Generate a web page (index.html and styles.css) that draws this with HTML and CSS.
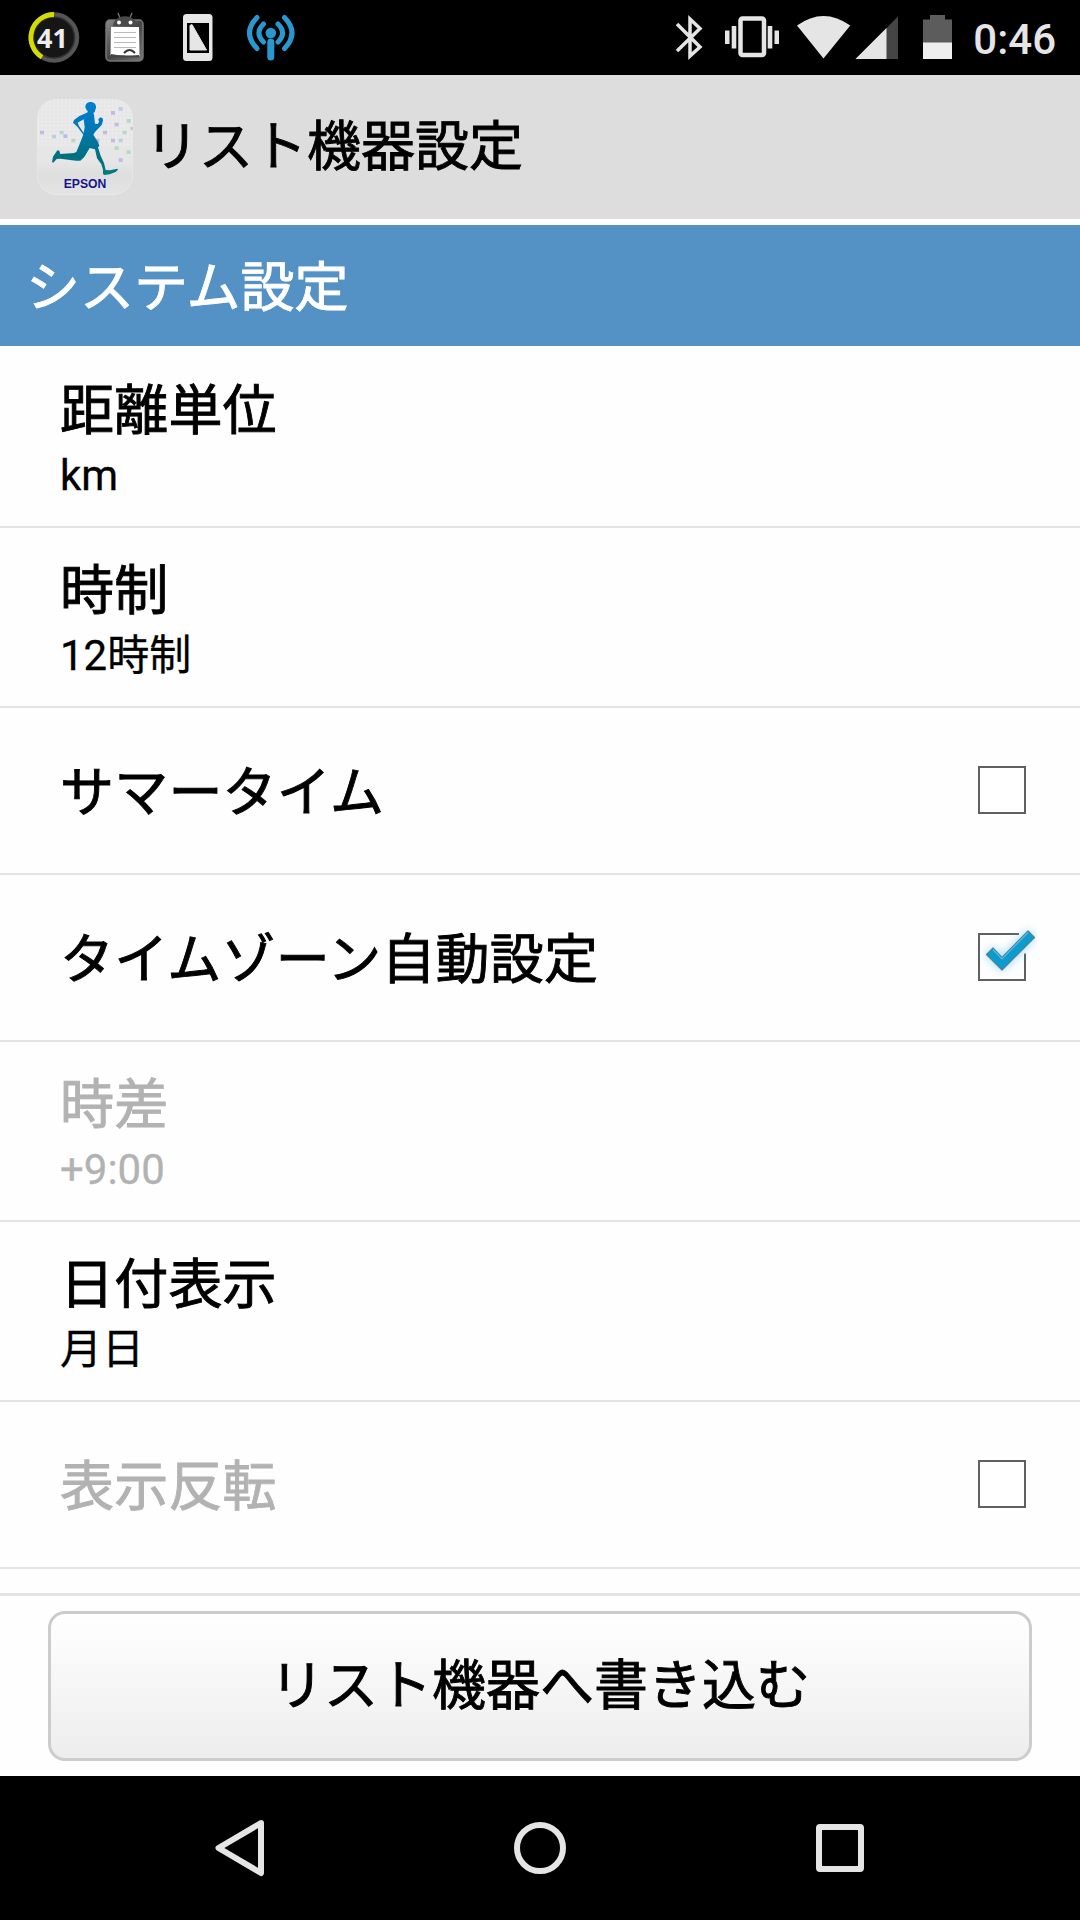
FILE: index.html
```html
<!DOCTYPE html>
<html lang="ja">
<head>
    <meta charset="UTF-8">
    <meta name="viewport" content="width=device-width, initial-scale=1.0">
    <title>リスト機器設定</title>
    <link rel="stylesheet" href="styles.css">
</head>
<body>
    <div class="status-bar">
        <div class="status-left">
            <svg width="54" height="75" viewBox="27 0 54 75">
                <circle cx="54" cy="37.5" r="23" fill="#161616" stroke="#555" stroke-width="4.5"/>
                <circle cx="54" cy="37.5" r="20.5" fill="none" stroke="#333" stroke-width="1.5"/>
                <path d="M54 14.5A23 23 0 0 0 42 57.2" fill="none" stroke="#d2dc00" stroke-width="4.8"/>
                <text class="badge" x="52.5" y="47.5" text-anchor="middle" textLength="31">41</text>
            </svg>
            <svg width="40" height="75" viewBox="106 0 40 75">
                <defs>
                    <linearGradient id="board" x1="0" y1="0" x2="1" y2="1">
                        <stop offset="0" stop-color="#8a8a8a"/>
                        <stop offset=".5" stop-color="#444"/>
                        <stop offset="1" stop-color="#777"/>
                    </linearGradient>
                </defs>
                <path d="M119 13l2 5M133 13l-2 5" stroke="#777" stroke-width="1.3"/>
                <rect x="107" y="20" width="37" height="41" rx="4" fill="url(#board)" stroke="#777" stroke-width="1.5"/>
                <path d="M112 27h28l.5 29-29 -1z" fill="#fff"/>
                <path d="M114 26C115 13 137 13 138 26z" fill="#4a4a4a"/>
                <circle cx="120" cy="22.5" r="2" fill="#fff"/>
                <circle cx="131.5" cy="22.5" r="2" fill="#fff"/>
                <path d="M115 32.5h22M115 37.5h22M115 42.5h22M115 47.5h22" stroke="#bbb" stroke-width="1.2"/>
                <path d="M112 54q12 3 28 1v2.5h-28z" fill="#444"/>
                <path d="M125 53q5.5-6 11 0" fill="none" stroke="#333" stroke-width="2"/>
            </svg>
            <svg width="30" height="75" viewBox="183 0 30 75">
                <rect x="183" y="14" width="29.5" height="47" rx="3.5" fill="#e6e6e6"/>
                <rect x="187" y="23" width="22" height="30" fill="#000"/>
                <path d="M190 25.5v24.5h16.5L192 24.5z" fill="#e6e6e6" stroke="#e6e6e6" stroke-linejoin="round"/>
            </svg>
            <svg width="48" height="75" viewBox="247 0 48 75">
                <g fill="none" stroke="#2798d0" stroke-width="5" stroke-linecap="round">
                    <path d="M257 17.5Q242 33 257 48.5M284.5 17.5Q299.5 33 284.5 48.5"/>
                    <path d="M263.5 24Q254.5 33 263.5 42M278 24Q287 33 278 42"/>
                    <path d="M270.8 42v15" stroke-width="7"/>
                </g>
                <circle cx="270.8" cy="33" r="5.3" fill="#2798d0"/>
            </svg>
        </div>
        <div class="status-right">
            <svg width="30" height="75" viewBox="674 0 30 75">
                <path d="M677 24l23 23-10 9V19l10 9.5L677 51" fill="none" stroke="#e5e5e5" stroke-width="3.5"/>
            </svg>
            <svg width="54" height="75" viewBox="725 0 54 75">
                <rect x="740.5" y="18.5" width="23.5" height="36.5" rx="2" fill="none" stroke="#e5e5e5" stroke-width="4.5"/>
                <path d="M725 30.5h4.5v13.5H725zM731.7 26h4.6v22.5h-4.6zM767.7 26h4.6v22.5h-4.6zM774.5 30.5h4.5v13.5h-4.5z" fill="#e5e5e5"/>
            </svg>
            <svg width="54" height="75" viewBox="797 0 54 75">
                <path d="M797 25.5Q823.5 6.5 850.3 25.5L823.5 58.5z" fill="#e5e5e5"/>
            </svg>
            <svg width="43" height="75" viewBox="855 0 43 75">
                <path d="M855.5 59L898 16.5V59z" fill="#454545"/>
                <path d="M855.5 59L886.5 28V59z" fill="#e5e5e5"/>
            </svg>
            <svg width="29" height="75" viewBox="923 0 29 75">
                <path d="M923 19.5h7V15h15v4.5h7V43h-29z" fill="#5c5c5c"/>
                <path d="M923 42.5h29V59h-29z" fill="#efefef"/>
            </svg>
            <span class="clock">0:46</span>
        </div>
    </div>

    <div class="header">
        <svg class="app-icon" viewBox="21 27 288 288">
            <defs>
                <linearGradient id="tile" x1="0" y1="0" x2="0" y2="1">
                    <stop offset="0" stop-color="#e6e6e6"/>
                    <stop offset=".65" stop-color="#e6e6e6"/>
                    <stop offset=".8" stop-color="#dedede"/>
                    <stop offset="1" stop-color="#e4e4e4"/>
                </linearGradient>
                <linearGradient id="body" gradientUnits="userSpaceOnUse" x1="0" y1="36" x2="0" y2="255">
                    <stop offset="0" stop-color="#0080d0"/>
                    <stop offset=".35" stop-color="#0078b8"/>
                    <stop offset=".75" stop-color="#007080"/>
                    <stop offset="1" stop-color="#007c80"/>
                </linearGradient>
                <pattern id="grid" width="11.7" height="11.7" patternUnits="userSpaceOnUse">
                    <path d="M0 1.5h12M1.5 0v12" stroke="#f0f0f0" stroke-width="2"/>
                </pattern>
            </defs>
            <rect x="22" y="28" width="286" height="286" rx="58" fill="url(#tile)" stroke="#ececec" stroke-width="2"/>
            <path d="M80 29h170q57 0 57 57v84H23V86q0-57 57-57z" fill="url(#grid)" opacity=".7"/>
            <g fill="#c3b9e3">
                <path d="M30 122h12v11H30zM100 133h12v11h-12zM243 63h12v11h-12zM254 98h12v11h-12zM219 122h12v11h-12zM243 146h12v11h-12zM266 205h12v11h-12zM196 146h12v11h-12zM302 111h6v9h-6z"/>
            </g>
            <g fill="#b9cfe6">
                <path d="M66 134h12v11H66zM266 51h12v11h-12zM266 146h12v11h-12z"/>
            </g>
            <g fill="#b8d8c6">
                <path d="M89 122h12v11H89zM124 146h12v11h-12zM290 87h12v11h-12zM278 122h12v11h-12zM254 169h12v11h-12zM290 181h12v11h-12z"/>
            </g>
            <g fill="url(#body)">
                <path d="M182 36C192 36 199 43 198 53L194 66L190 69L192 74L195 101L203 102L207 96L205 88L211 82L218 85L219 92L215 105L195 126L190 134L205 158L208 168L204 172L212 197L222 219L227 240L240 241L262 236L264 239L257 246L239 253L223 255L219 252L219 239L214 223L201 205L195 178L179 174L163 201L151 212L138 212L91 206L80 207L70 218L66 216L69 200L82 181L88 182L91 192L132 189L139 186L148 164L156 144L160 134L142 110L129 98L132 90L147 79L167 70L174 66L167 55C164 44 171 36 182 36zM161 88L143 98L147 108L161 129L164 112z" fill-rule="evenodd"/>
            </g>
            <text class="brand" x="165" y="294" text-anchor="middle" textLength="128" lengthAdjust="spacingAndGlyphs">EPSON</text>
        </svg>
        <h1>リスト機器設定</h1>
    </div>

    <h2>システム設定</h2>

    <div class="settings">
        <div class="row">
            <p class="title">距離単位</p>
            <p class="value">km</p>
        </div>
        <div class="row">
            <p class="title">時制</p>
            <p class="value">12時制</p>
        </div>
        <div class="row check-row">
            <p class="title">サマータイム</p>
            <span class="box"></span>
        </div>
        <div class="row check-row">
            <p class="title">タイムゾーン自動設定</p>
            <svg class="checked" width="70" height="70" viewBox="-11 -13 70 70">
                <path d="M41 1H1v46h46V20.5" fill="none" stroke="#606060" stroke-width="2"/>
                <g class="tick">
                    <path d="M8.5 21.5l6.5-6.5 9 9.5L50-2l6.5 6.5L24 37z" fill="#0b9bd0" stroke="#55808f" stroke-width="1.2" stroke-linejoin="round"/>
                    <path d="M15 16.5l9 9.5L50-.5" fill="none" stroke="#5cb8dc" stroke-width="1.2"/>
                </g>
            </svg>
        </div>
        <div class="row disabled">
            <p class="title">時差</p>
            <p class="value">+9:00</p>
        </div>
        <div class="row">
            <p class="title">日付表示</p>
            <p class="value">月日</p>
        </div>
        <div class="row check-row disabled">
            <p class="title">表示反転</p>
            <span class="box"></span>
        </div>
    </div>

    <div class="footer">
        <button class="write-button">リスト機器へ書き込む</button>
    </div>

    <div class="nav-bar">
        <svg width="60" height="60" viewBox="0 0 60 60">
            <path d="M51 5L8.5 30 51 55z" transform="translate(0 0)"/>
        </svg>
        <svg width="60" height="60" viewBox="0 0 60 60">
            <circle cx="30" cy="30" r="23"/>
        </svg>
        <svg width="60" height="60" viewBox="0 0 60 60">
            <rect x="9" y="9" width="42" height="42" rx="1"/>
        </svg>
    </div>
</body>
</html>
```
FILE: styles.css
```css
*{
    margin: 0;
    padding: 0;
    box-sizing: border-box;
}
body{
    width: 1080px;
    height: 1920px;
    display: flex;
    flex-direction: column;
    overflow: hidden;
    background-color: #fefefe;
    color: #000;
    font-family: Roboto, "Noto Sans CJK JP", sans-serif;
}
svg{
    display: block;
    flex: none;
}

.status-bar{
    height: 75px;
    display: flex;
    justify-content: space-between;
    padding: 0 24px 0 27px;
    background-color: #000;
}
.status-left, .status-right{
    display: flex;
}
.status-left{
    gap: 24px;
}
.status-left svg:nth-child(3){
    margin-left: 14px;
}
.status-left svg:nth-child(4){
    margin-left: 10px;
}
.status-right{
    gap: 21px;
}
.status-right svg:nth-child(3){
    margin-left: -3px;
}
.status-right svg:nth-child(4){
    margin-left: -17px;
}
.status-right svg:nth-child(5){
    margin-left: 4px;
}
.badge{
    font: bold 27px "Noto Sans", sans-serif;
    fill: #eee;
}
.clock{
    color: #e5e5e5;
    font-size: 42px;
    font-weight: 500;
    line-height: 79px;
}

.header{
    height: 150px;
    display: flex;
    align-items: center;
    padding-left: 37px;
    background-color: #ddd;
    border-bottom: 6px solid #fefefe;
}
.app-icon{
    width: 96px;
    height: 96px;
}
.brand{
    font: bold 38px "Liberation Sans", sans-serif;
    fill: #14148c;
}
h1, h2, .title, .write-button{
    font-size: 54px;
    font-weight: 400;
    line-height: 64px;
    -webkit-text-stroke: 0.9px currentColor;
}
h1{
    margin-left: 12px;
    padding-top: 2px;
}
h2{
    height: 121px;
    margin-bottom: 2px;
    padding: 32px 0 0 26px;
    background-color: #5492c6;
    color: #fff;
}

.settings{
    height: 1245px;
}
.row{
    height: 180px;
    padding: 32px 52px 0 60px;
    border-bottom: 2px solid #e4e4e4;
}
.title{
    letter-spacing: 0.2px;
}
.value{
    margin-top: 7px;
    font-size: 42px;
    line-height: 50px;
    -webkit-text-stroke: 0.3px currentColor;
}
.check-row{
    height: 167px;
    display: flex;
    align-items: center;
    justify-content: space-between;
    padding-top: 0;
}
.check-row .title{
    padding-top: 6px;
}
.disabled{
    color: #b2b2b2;
}
.box{
    width: 48px;
    height: 48px;
    margin: 0 2px 2px 0;
    border: 2px solid #606060;
    background-color: #fff;
}
.checked{
    margin: 0 -9px 5px 0;
}
.tick{
    filter: drop-shadow(0 0 5px rgba(80, 190, 240, 0.6));
}

.footer{
    height: 183px;
    padding: 15px 48px;
    border-top: 3px solid #e4e4e4;
}
.write-button{
    display: block;
    width: 984px;
    height: 150px;
    padding-top: 2px;
    border: 3px solid #ccc;
    border-radius: 17px;
    background: linear-gradient(#fff, #ededed);
    color: #000;
    font-family: inherit;
}

.nav-bar{
    height: 144px;
    display: flex;
    justify-content: center;
    align-items: center;
    gap: 240px;
    background-color: #000;
}
.nav-bar svg{
    fill: none;
    stroke: #e5e5e5;
    stroke-width: 6;
    stroke-linejoin: round;
}
```
